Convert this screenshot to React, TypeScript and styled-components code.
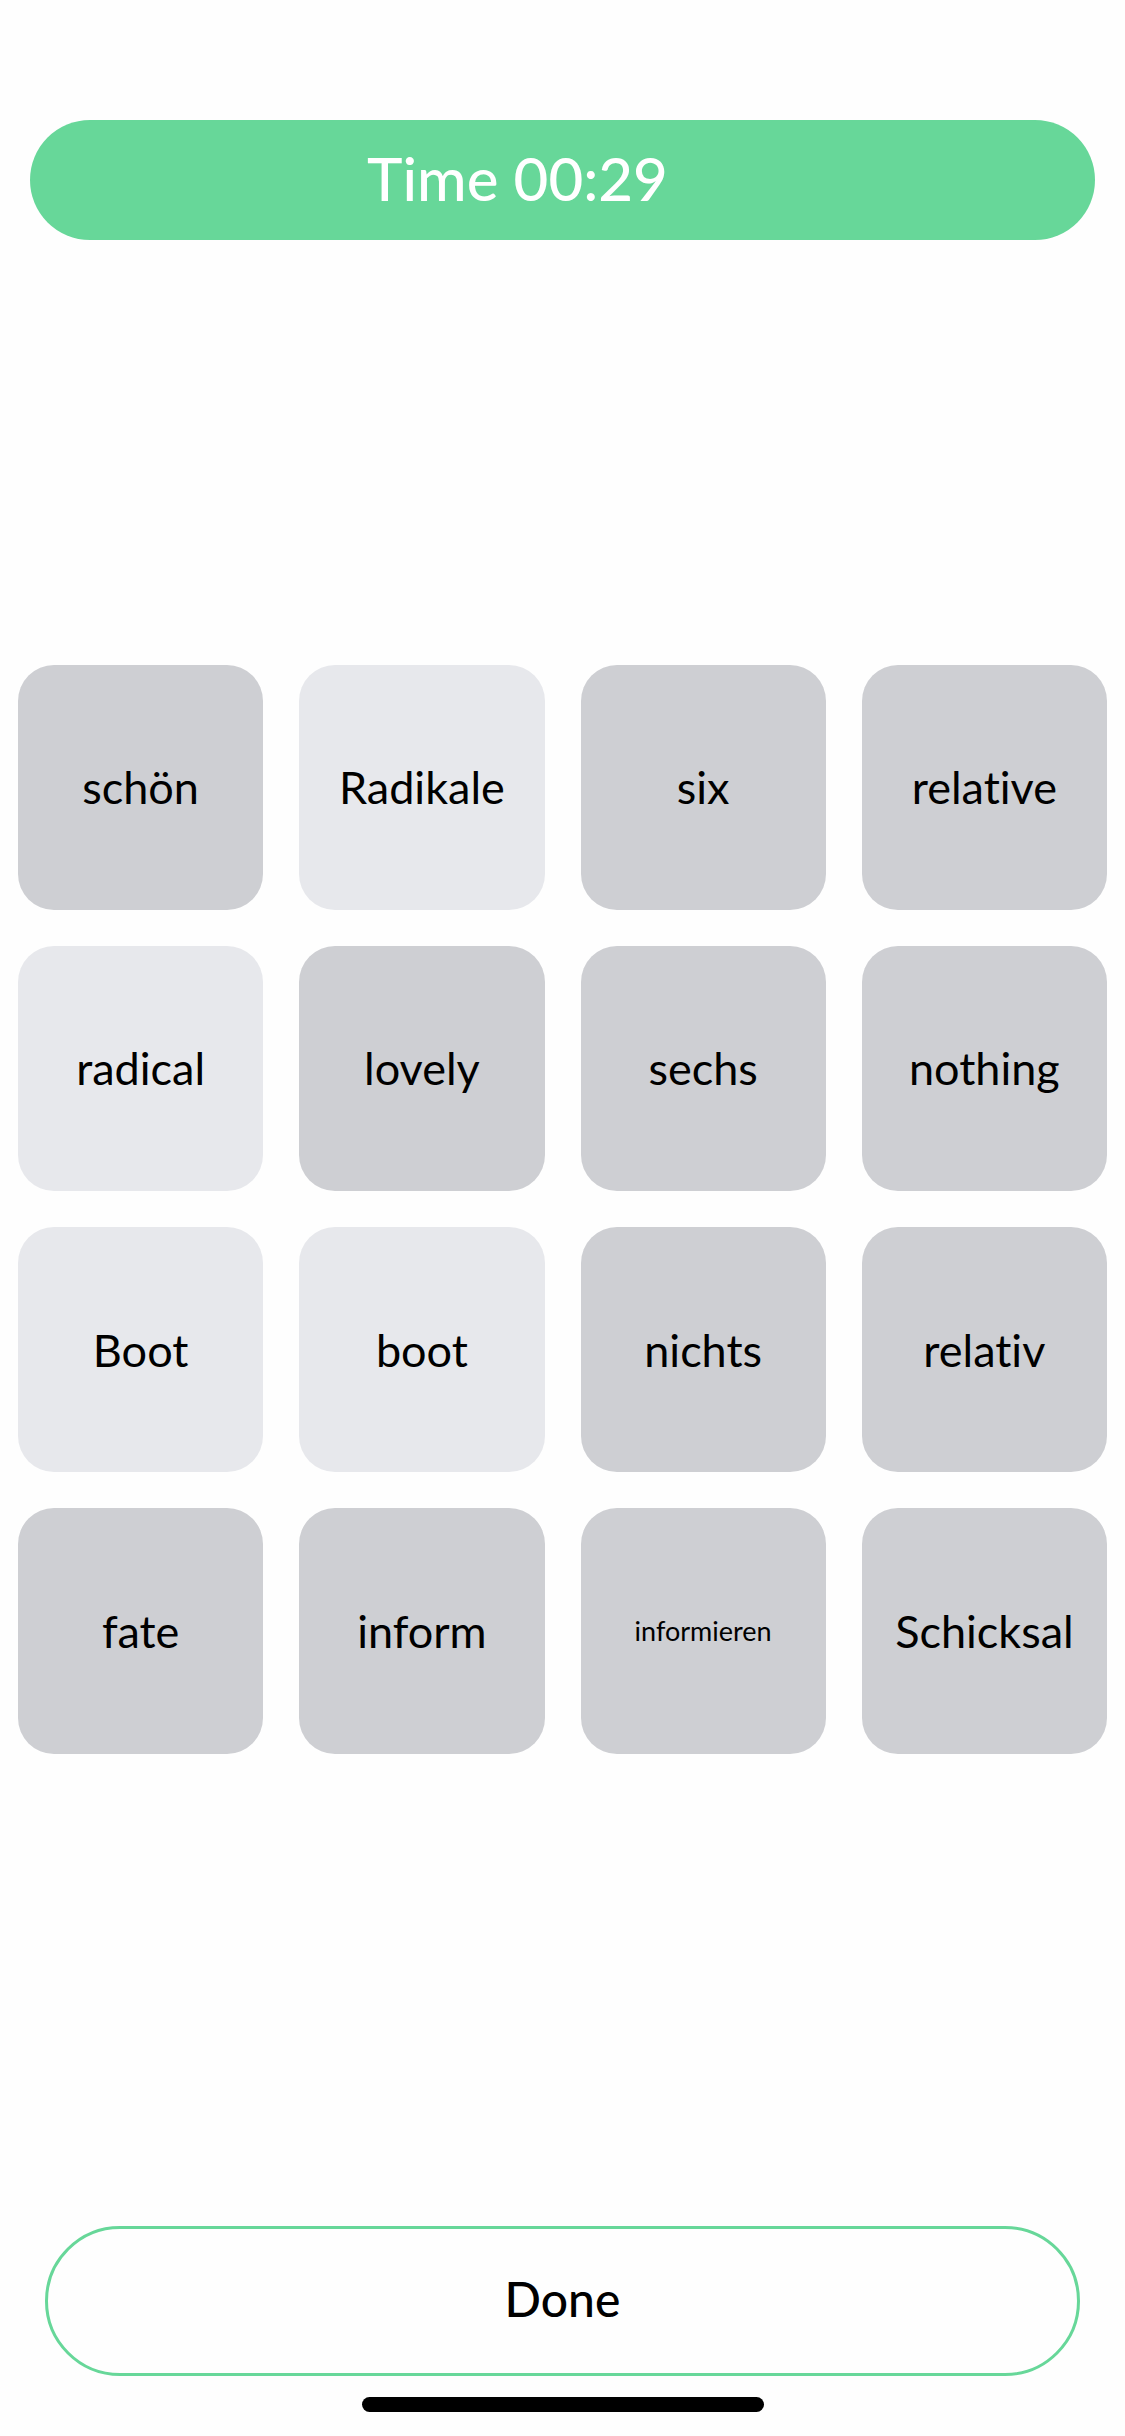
import { useState } from 'react';
import styled, { createGlobalStyle } from 'styled-components';

const GlobalStyle = createGlobalStyle`
  *, *::before, *::after { box-sizing: border-box; }
  body {
    margin: 0;
    background: #fefefe;
    color: #000;
    font-family: Avenir, Lato, "Open Sans", sans-serif;
    font-variant-ligatures: none;
  }
  button {
    font: inherit;
    font-variant-ligatures: none;
    color: inherit;
    cursor: pointer;
  }
`;

const Screen = styled.div`
  display: flex;
  flex-direction: column;
  min-height: 100vh;
`;

const Header = styled.header`
  padding: 120px 30px 0;
`;

const TimerBar = styled.div`
  display: flex;
  align-items: center;
  justify-content: center;
  height: 120px;
  padding: 0 90px 4px 0;
  border-radius: 60px;
  background: #67d799;
  color: #fff;
  font-size: 60px;
  font-weight: 500;
  line-height: 72px;
`;

const Board = styled.main`
  flex: 1;
  display: grid;
  grid-template-columns: repeat(4, 1fr);
  align-content: center;
  gap: 36px;
  padding: 0 18px 48px;
`;

const Tile = styled.button<{ $picked: boolean; $small: boolean }>`
  display: flex;
  align-items: center;
  justify-content: center;
  aspect-ratio: 1;
  min-width: 0;
  padding: 0;
  border: 0;
  border-radius: 36px;
  background: ${({ $picked }) => ($picked ? '#e7e8ec' : '#cecfd3')};
  && {
    font-size: ${({ $small }) => ($small ? '27px' : '45px')};
    line-height: ${({ $small }) => ($small ? '36px' : '54px')};
  }
`;

const Footer = styled.footer`
  display: flex;
  flex-direction: column;
  align-items: center;
  gap: 21px;
  padding: 0 45px 24px;
`;

const DoneButton = styled.button`
  width: 100%;
  height: 150px;
  padding: 0 0 4px;
  border: 3px solid #67d799;
  border-radius: 75px;
  background: transparent;
  && {
    font-size: 48px;
    font-weight: 500;
    line-height: 60px;
  }
`;

const HomeIndicator = styled.div`
  width: 402px;
  height: 15px;
  border-radius: 8px;
  background: #000;
`;

const words = [
  'schön', 'Radikale', 'six', 'relative',
  'radical', 'lovely', 'sechs', 'nothing',
  'Boot', 'boot', 'nichts', 'relativ',
  'fate', 'inform', 'informieren', 'Schicksal',
];

const longWord = 10;

export default function App() {
  const [picked, setPicked] = useState(['Radikale', 'radical', 'Boot', 'boot']);

  const toggle = (word: string) =>
    setPicked((current) =>
      current.includes(word) ? current.filter((w) => w !== word) : [...current, word],
    );

  return (
    <>
      <GlobalStyle />
      <Screen>
        <Header>
          <TimerBar role="timer">Time 00:29</TimerBar>
        </Header>
        <Board>
          {words.map((word) => (
            <Tile
              key={word}
              type="button"
              aria-pressed={picked.includes(word)}
              $picked={picked.includes(word)}
              $small={word.length > longWord}
              onClick={() => toggle(word)}
            >
              {word}
            </Tile>
          ))}
        </Board>
        <Footer>
          <DoneButton type="button">Done</DoneButton>
          <HomeIndicator />
        </Footer>
      </Screen>
    </>
  );
}
